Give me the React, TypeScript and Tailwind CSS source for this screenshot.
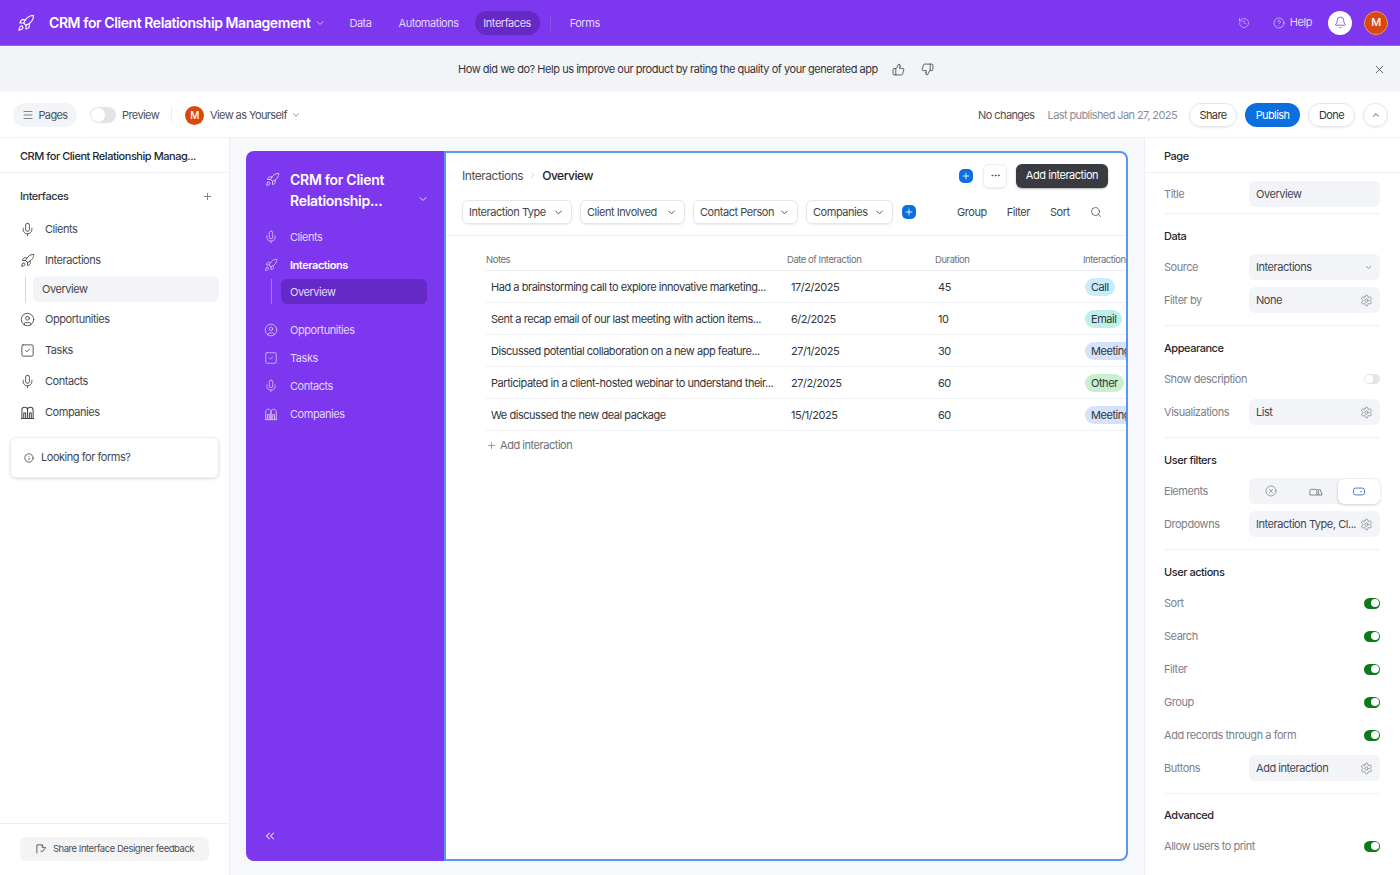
import {
  Bell,
  ChevronDown,
  ChevronRight,
  ChevronUp,
  ChevronsLeft,
  CircleHelp,
  CircleUser,
  CircleX,
  Ellipsis,
  History,
  Info,
  Menu,
  Mic,
  Plus,
  Rocket,
  Search,
  Settings,
  SquareCheck,
  ThumbsDown,
  ThumbsUp,
  X,
} from 'lucide-react';
import type { ReactNode } from 'react';

function CompaniesIcon({ className }: { className?: string }) {
  return (
    <svg viewBox="0 0 16 16" fill="none" stroke="currentColor" strokeWidth="1.1" className={className}>
      <path d="M1 14.5h14M2 14.5V5.5C2 3.5 3.5 2.5 5 2.5s3 1 3 3v9M8 14.5V5.5c0-2 1.5-3 3-3s3 1 3 3v9" />
      <path d="M4 14V8.5h2V14M10 14V8.5h2V14" />
    </svg>
  );
}

function FeedbackIcon({ className }: { className?: string }) {
  return (
    <svg viewBox="0 0 16 16" fill="none" stroke="currentColor" strokeWidth="1.2" className={className}>
      <path d="M2.5 14V2.5h8l-1.5 3 5 .5-3.5 5H7.5" strokeLinejoin="round" />
    </svg>
  );
}

function Toggle() {
  return (
    <div className="flex h-[11px] w-4 items-center justify-end rounded-full bg-[#0b7a1a] pr-[1px]">
      <div className="h-[8px] w-[8px] rounded-full bg-white" />
    </div>
  );
}

function Avatar() {
  return (
    <div className="flex h-[19px] w-[19px] shrink-0 items-center justify-center rounded-full bg-[#d9480f] text-[10px] font-medium text-white">
      M
    </div>
  );
}

const navItems = [
  { name: 'Clients', icon: Mic },
  { name: 'Interactions', icon: Rocket },
  { name: 'Opportunities', icon: CircleUser },
  { name: 'Tasks', icon: SquareCheck },
  { name: 'Contacts', icon: Mic },
  { name: 'Companies', icon: CompaniesIcon },
];

function LeftSidebar() {
  return (
    <aside className="flex w-[230px] shrink-0 flex-col border-r border-[#eceef2] bg-white">
      <div className="flex h-[35px] items-center border-b border-[#f0f1f4] pl-5 pt-[2px] text-[11px] font-medium text-[#26282e]">
        CRM for Client Relationship Manag...
      </div>
      <div className="flex h-[40px] items-end justify-between pb-[9px] pl-5 pr-4 text-[11px] font-medium text-[#33353b]">
        <span>Interfaces</span>
        <Plus className="mb-[2px] h-[11px] w-[11px] text-[#777b84]" />
      </div>
      <nav className="flex flex-col pt-[1px]">
        {navItems.map((item) => (
          <div key={item.name}>
            <div className="flex h-[31px] items-center gap-[10px] pl-[20px] text-[11px] text-[#43464e]">
              <item.icon className="h-[15px] w-[15px] text-[#43464e]" strokeWidth={1.4} />
              {item.name}
            </div>
            {item.name === 'Interactions' && (
              <div className="ml-[25px] mb-[1px] flex h-[27px] border-l border-[#d8dae0] pl-[7px]">
                <div className="flex h-[26px] w-[186px] items-center rounded-md bg-[#f3f4f8] pl-[9px] pt-[1px] text-[11px] text-[#43464e]">
                  Overview
                </div>
              </div>
            )}
          </div>
        ))}
      </nav>
      <div className="mx-[10px] mt-[9px] flex h-[41px] items-center gap-[7px] rounded-md border border-[#eceef2] pl-[13px] text-[11px] text-[#43464e] shadow-[0_1px_3px_rgba(0,0,0,0.14)]">
        <Info className="h-[10px] w-[10px]" />
        Looking for forms?
      </div>
      <div className="mt-auto flex h-[52px] items-start border-t border-[#eceef2] px-5 pt-[13px]">
        <div className="flex h-[24px] w-[189px] items-center justify-center gap-[6px] rounded-md bg-[#f4f4f5] text-[9.5px] text-[#4d5058]">
          <FeedbackIcon className="h-[12px] w-[12px]" />
          Share Interface Designer feedback
        </div>
      </div>
    </aside>
  );
}

function AppSidebar() {
  return (
    <div className="flex w-[198px] shrink-0 flex-col rounded-l-lg bg-[#7c37ef] pb-[18px]">
      <div className="flex pl-[19px] pr-[15px] pt-[18px] text-white">
        <Rocket className="mt-[3px] h-[15px] w-[15px] text-[#e4d6fb]" strokeWidth={1.4} />
        <div className="ml-[10px] flex-1 text-[14px] font-semibold leading-[21px] tracking-[-0.02em]">
          CRM for Client
          <br />
          Relationship...
        </div>
        <ChevronDown className="mt-[24px] h-[12px] w-[12px] text-[#e4d6fb]" />
      </div>
      <nav className="mt-[12px] flex flex-col">
        {navItems.map((item) => (
          <div key={item.name}>
            <div
              className={`flex h-[28px] items-center gap-[12px] pl-[18px] text-[11px] ${
                item.name === 'Interactions' ? 'font-semibold text-white' : 'text-[#e4d6fb]'
              }`}
            >
              <item.icon className="h-[14px] w-[14px] text-[#d6c2fa]" strokeWidth={1.4} />
              {item.name}
            </div>
            {item.name === 'Interactions' && (
              <div className="mb-[12px] ml-[25px] flex h-[25px] border-l border-[#a57af3] pl-[9px]">
                <div className="flex h-[25px] w-[146px] items-center rounded-md bg-[#6429c6] pl-[9px] pt-[1px] text-[11px] text-[#e4d6fb]">
                  Overview
                </div>
              </div>
            )}
          </div>
        ))}
      </nav>
      <ChevronsLeft className="ml-[17px] mt-auto h-[14px] w-[14px] text-[#d6c2fa]" />
    </div>
  );
}

const filters = [
  { label: 'Interaction Type', w: 'w-[110px]' },
  { label: 'Client Involved', w: 'w-[105px]' },
  { label: 'Contact Person', w: 'w-[105px]' },
  { label: 'Companies', w: 'w-[87px]' },
];

const rows = [
  { note: 'Had a brainstorming call to explore innovative marketing...', date: '17/2/2025', dur: '45', tag: 'Call', tagClass: 'bg-[#c9ecfa]' },
  { note: 'Sent a recap email of our last meeting with action items...', date: '6/2/2025', dur: '10', tag: 'Email', tagClass: 'bg-[#bdf0e8]' },
  { note: 'Discussed potential collaboration on a new app feature...', date: '27/1/2025', dur: '30', tag: 'Meeting', tagClass: 'bg-[#d3e3fb]' },
  { note: 'Participated in a client-hosted webinar to understand their...', date: '27/2/2025', dur: '60', tag: 'Other', tagClass: 'bg-[#c8f0cf]' },
  { note: 'We discussed the new deal package', date: '15/1/2025', dur: '60', tag: 'Meeting', tagClass: 'bg-[#d3e3fb]' },
];

function PlusBadge() {
  return (
    <div className="flex h-[14px] w-[14px] shrink-0 items-center justify-center rounded-[5px] bg-[#0b6fdf]">
      <Plus className="h-[10px] w-[10px] text-white" strokeWidth={2} />
    </div>
  );
}

function Canvas() {
  return (
    <div className="flex min-w-0 flex-1 flex-col overflow-hidden rounded-r-lg border-2 border-[#5a97f2] bg-white">
      <div className="flex h-[45px] items-center pl-[16px] pr-[18px]">
        <span className="text-[12px] text-[#4d5058]">Interactions</span>
        <ChevronRight className="mx-[5px] h-[9px] w-[9px] text-[#c2c4ca]" />
        <span className="text-[12px] font-medium text-[#1f2126]">Overview</span>
        <div className="ml-auto">
          <PlusBadge />
        </div>
        <div className="ml-[10px] flex h-[24px] w-[24px] items-center justify-center rounded-md border border-[#eceef2] shadow-[0_1px_2px_rgba(0,0,0,0.1)]">
          <Ellipsis className="h-[11px] w-[11px] text-[#43464e]" />
        </div>
        <div className="ml-[9px] flex h-[24px] w-[92px] items-center justify-center rounded-md bg-[#3a3b40] text-[11px] text-white shadow-[0_1px_2px_rgba(0,0,0,0.3)]">
          Add interaction
        </div>
      </div>
      <div className="flex h-[38px] items-start gap-[8px] border-b border-[#f0f1f4] pl-[16px] pt-[2px]">
        {filters.map((f) => (
          <div
            key={f.label}
            className={`${f.w} flex h-[24px] shrink-0 items-center justify-between whitespace-nowrap rounded-md border border-[#e4e6ea] pl-[6px] pr-[7px] text-[11px] text-[#43464e] shadow-[0_1px_2px_rgba(0,0,0,0.08)]`}
          >
            {f.label}
            <ChevronDown className="h-[11px] w-[11px]" />
          </div>
        ))}
        <div className="ml-[1px] mt-[5px]">
          <PlusBadge />
        </div>
        <div className="ml-[33px] mt-[4px] flex items-center gap-[20px] text-[11px] text-[#43464e]">
          <span>Group</span>
          <span>Filter</span>
          <span>Sort</span>
          <Search className="h-[12px] w-[12px]" strokeWidth={1.5} />
        </div>
      </div>
      <div className="pl-[40px] pt-[17px]">
        <div className="grid h-[18px] grid-cols-[301px_148px_148px_1fr] items-center whitespace-nowrap border-b border-[#eceef2] pb-[2px] text-[9.5px] text-[#6d7079]">
          <span>Notes</span>
          <span>Date of Interaction</span>
          <span>Duration</span>
          <span>Interaction</span>
        </div>
        {rows.map((r) => (
          <div
            key={r.note}
            className="grid h-[32px] grid-cols-[301px_148px_148px_1fr] items-center whitespace-nowrap border-b border-[#eff0f3] pt-[1px] text-[11px] text-[#33353b]"
          >
            <span className="pl-[5px]">{r.note}</span>
            <span className="pl-[4px]">{r.date}</span>
            <span className="pl-[3px]">{r.dur}</span>
            <div className="pl-[2px]">
              <span className={`inline-block rounded-full px-[6px] py-[1px] ${r.tagClass}`}>{r.tag}</span>
            </div>
          </div>
        ))}
        <div className="flex h-[29px] items-center gap-[3px] text-[11px] text-[#6d7079]">
          <Plus className="h-[11px] w-[11px]" strokeWidth={1.4} />
          Add interaction
        </div>
      </div>
    </div>
  );
}

function Field({ label, value, icon }: { label: string; value: string; icon?: 'gear' | 'chevron' }) {
  return (
    <div className="flex h-[26px] items-center">
      <span className="w-[85px] text-[11px] text-[#7d8089]">{label}</span>
      <div className="flex h-[26px] flex-1 items-center justify-between whitespace-nowrap rounded-md bg-[#f3f4f8] pl-[7px] pr-[7px] text-[11px] text-[#43464e]">
        {value}
        {icon === 'gear' && <Settings className="h-[13px] w-[13px] text-[#71757f]" strokeWidth={1.3} />}
        {icon === 'chevron' && <ChevronDown className="h-[9px] w-[9px] text-[#71757f]" />}
      </div>
    </div>
  );
}

function SwitchRow({ label, on = true }: { label: string; on?: boolean }) {
  return (
    <div className="flex h-[26px] items-center justify-between text-[11px] text-[#7d8089]">
      {label}
      {on ? (
        <Toggle />
      ) : (
        <div className="flex h-[10px] w-4 items-center rounded-full bg-[#e3e4e8] pl-[1px]">
          <div className="h-[8px] w-[8px] rounded-full bg-white" />
        </div>
      )}
    </div>
  );
}

function Section({ title, children, last }: { title: string; children: ReactNode; last?: boolean }) {
  return (
    <div className={last ? 'pt-[13px]' : 'border-b border-[#f0f1f4] pb-[12px] pt-[14px]'}>
      <div className="mb-[10px] flex h-[16px] items-center text-[11px] font-medium text-[#26282e]">{title}</div>
      <div className="flex flex-col gap-[7px]">{children}</div>
    </div>
  );
}

function RightPanel() {
  return (
    <aside className="flex w-[256px] shrink-0 flex-col border-l border-[#eceef2] bg-white">
      <div className="flex h-[35px] items-center border-b border-[#f0f1f4] pl-[19px] pt-[2px] text-[11px] font-medium text-[#26282e]">
        Page
      </div>
      <div className="pl-[19px] pr-[20px]">
        <div className="border-b border-[#f0f1f4] pb-[6px] pt-[8px]">
          <Field label="Title" value="Overview" />
        </div>
        <Section title="Data">
          <Field label="Source" value="Interactions" icon="chevron" />
          <Field label="Filter by" value="None" icon="gear" />
        </Section>
        <Section title="Appearance">
          <SwitchRow label="Show description" on={false} />
          <Field label="Visualizations" value="List" icon="gear" />
        </Section>
        <Section title="User filters">
          <div className="flex h-[26px] items-center">
            <span className="w-[85px] text-[11px] text-[#7d8089]">Elements</span>
            <div className="flex h-[26px] flex-1 items-center rounded-md bg-[#f3f4f8] text-[#71757f]">
              <div className="flex flex-1 justify-center">
                <CircleX className="h-[12px] w-[12px]" strokeWidth={1.3} />
              </div>
              <div className="flex flex-1 justify-center">
                <svg viewBox="0 0 16 10" fill="none" stroke="currentColor" strokeWidth="1" className="h-[9px] w-[14px]">
                  <path d="M1 9V4.5a2 2 0 0 1 2-2h4a2 2 0 0 1 2 2V9zM9 9h6M9 2.5a2 2 0 0 1 2 2V9M11.5 2.5a2 2 0 0 1 2 2L15 9" />
                </svg>
              </div>
              <div className="flex h-[25px] w-[42px] items-center justify-center rounded-md bg-white shadow-[0_1px_3px_rgba(0,0,0,0.2)]">
                <svg viewBox="0 0 14 10" fill="none" className="h-[9px] w-[12px]">
                  <rect x="0.6" y="1" width="12.8" height="8" rx="2.5" stroke="#3f74d8" strokeWidth="1.1" />
                  <path d="M8 4.5h3l-1.5 1.5z" fill="#3f74d8" />
                </svg>
              </div>
            </div>
          </div>
          <Field label="Dropdowns" value="Interaction Type, Cl..." icon="gear" />
        </Section>
        <Section title="User actions">
          <SwitchRow label="Sort" />
          <SwitchRow label="Search" />
          <SwitchRow label="Filter" />
          <SwitchRow label="Group" />
          <SwitchRow label="Add records through a form" />
          <Field label="Buttons" value="Add interaction" icon="gear" />
        </Section>
        <Section title="Advanced" last>
          <SwitchRow label="Allow users to print" />
        </Section>
      </div>
    </aside>
  );
}

export default function App() {
  return (
    <div className="flex h-[875px] w-[1400px] flex-col overflow-hidden bg-white font-['Inter',sans-serif] tracking-[-0.46px]">
      {/* Top bar */}
      <header className="flex h-[46px] shrink-0 items-center border-b border-[#9a62f5] bg-[#7c37ef] pl-[17px] pr-[12px] text-[11px]">
        <Rocket className="h-[18px] w-[18px] text-white" strokeWidth={1.5} />
        <span className="ml-[14px] text-[14px] font-semibold tracking-[-0.03em] text-white">
          CRM for Client Relationship Management
        </span>
        <ChevronDown className="ml-[4px] h-[12px] w-[12px] text-[#d6c2fa]" />
        <span className="ml-[23px] pt-[1px] text-[#e4d6fb]">Data</span>
        <span className="ml-[27px] pt-[1px] text-[#e4d6fb]">Automations</span>
        <span className="ml-[16px] flex h-[24px] w-[65px] items-center justify-center rounded-full bg-[#6429c6] pt-[1px] text-[#e4d6fb]">
          Interfaces
        </span>
        <div className="ml-[10px] h-[16px] w-px bg-[#8a4ff0]" />
        <span className="ml-[19px] pt-[1px] text-[#e4d6fb]">Forms</span>
        <History className="ml-auto h-[12px] w-[12px] text-[#d6c2fa]" strokeWidth={1.4} />
        <CircleHelp className="ml-[23px] h-[12px] w-[12px] text-[#e4d6fb]" strokeWidth={1.4} />
        <span className="ml-[5px] text-[#e4d6fb]">Help</span>
        <div className="ml-[16px] flex h-[24px] w-[24px] items-center justify-center rounded-full bg-white">
          <Bell className="h-[13px] w-[13px] text-[#7c37ef]" strokeWidth={1.5} />
        </div>
        <div className="ml-[12px] flex h-[24px] w-[24px] items-center justify-center rounded-full border border-[#f0966a] bg-[#d9480f] text-[11px] font-medium text-white">
          M
        </div>
      </header>

      {/* Feedback banner */}
      <div className="flex h-[46px] shrink-0 items-center bg-[#f2f4f8] pl-[458px] pr-[14px] text-[11px] text-[#33353b]">
        <span>How did we do? Help us improve our product by rating the quality of your generated app</span>
        <ThumbsUp className="ml-[14px] h-[13px] w-[13px]" strokeWidth={1.4} />
        <ThumbsDown className="ml-[16px] h-[13px] w-[13px]" strokeWidth={1.4} />
        <X className="ml-auto h-[13px] w-[13px]" strokeWidth={1.4} />
      </div>

      {/* Toolbar */}
      <div className="flex h-[46px] shrink-0 items-center border-b border-[#f0f1f4] pl-[13px] pr-[12px] pt-[1px] text-[11px] tracking-[-0.6px] text-[#4d5058]">
        <div className="flex h-[24px] w-[64px] items-center justify-center gap-[4px] rounded-full bg-[#f2f4f8]">
          <Menu className="h-[12px] w-[12px]" strokeWidth={1.4} />
          Pages
        </div>
        <div className="ml-[13px] flex h-[16px] w-[26px] items-center rounded-full bg-[#e3e4e8] pl-[1px]">
          <div className="h-[14px] w-[14px] rounded-full bg-white" />
        </div>
        <span className="ml-[6px]">Preview</span>
        <div className="ml-[12px] h-[16px] w-px bg-[#eceef2]" />
        <div className="ml-[13px]">
          <Avatar />
        </div>
        <span className="ml-[6px]">View as Yourself</span>
        <ChevronDown className="ml-[4px] h-[10px] w-[10px] text-[#71757f]" />
        <span className="ml-auto">No changes</span>
        <span className="ml-[13px] text-[#8a8d96]">Last published Jan 27, 2025</span>
        <div className="ml-[12px] flex h-[24px] w-[48px] items-center justify-center rounded-full border border-[#e4e6ea] text-[#33353b] shadow-[0_1px_2px_rgba(0,0,0,0.08)]">
          Share
        </div>
        <div className="ml-[8px] flex h-[24px] w-[55px] items-center justify-center rounded-full bg-[#0b6fdf] text-white">
          Publish
        </div>
        <div className="ml-[8px] flex h-[24px] w-[47px] items-center justify-center rounded-full border border-[#e4e6ea] text-[#33353b] shadow-[0_1px_2px_rgba(0,0,0,0.08)]">
          Done
        </div>
        <div className="ml-[8px] flex h-[24px] w-[25px] items-center justify-center rounded-full border border-[#e4e6ea] shadow-[0_1px_2px_rgba(0,0,0,0.08)]">
          <ChevronUp className="h-[10px] w-[10px] text-[#33353b]" />
        </div>
      </div>

      {/* Workspace */}
      <div className="flex min-h-0 flex-1 bg-[#f6f8fc]">
        <LeftSidebar />
        <main className="flex min-w-0 flex-1 px-4 pb-[14px] pt-[13px]">
          <div className="flex min-w-0 flex-1">
            <AppSidebar />
            <Canvas />
          </div>
        </main>
        <RightPanel />
      </div>
    </div>
  );
}
